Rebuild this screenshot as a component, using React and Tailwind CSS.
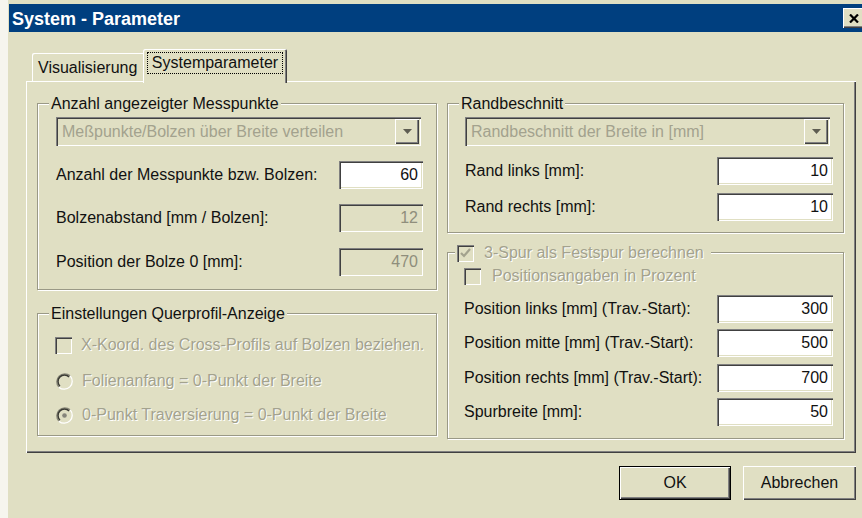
import React from "react";

// classic 3D edges
const raised =
  "shadow-[inset_1px_1px_#ffffff,inset_-1px_-1px_#404040,inset_-2px_-2px_#808080]";
const sunken =
  "shadow-[inset_1px_1px_#808080,inset_2px_2px_#404040,inset_-1px_-1px_#ffffff,inset_-2px_-2px_#e0dfc3]";
const grayed = "text-[#a3a28e] [text-shadow:1px_1px_#ffffff]";

function Group({ title, className, children, legendClass = "left-[11px]" }) {
  return (
    <div
      className={`relative border border-[#9a9986] shadow-[inset_1px_1px_#ffffff,1px_1px_#ffffff] ${className}`}
    >
      <div
        className={`absolute top-0 -translate-y-1/2 bg-[#e0dfc3] px-[2px] leading-[18px] whitespace-nowrap ${legendClass}`}
      >
        {title}
      </div>
      {children}
    </div>
  );
}

function Field({ value, disabled, className }) {
  return (
    <div
      className={`h-[28px] ${sunken} flex items-center justify-end pr-[5px] ${
        disabled ? "bg-[#e0dfc3] text-[#8f8e7c]" : "bg-white text-[#111111]"
      } ${className}`}
    >
      {value}
    </div>
  );
}

function Combo({ text }) {
  return (
    <div className={`h-[29px] ${sunken} flex p-[2px] mr-[2px]`}>
      <div className="flex-1 pl-[4px] flex items-center whitespace-nowrap overflow-hidden text-[#a3a28e]">
        {text}
      </div>
      <div className={`w-[24px] ${raised} bg-[#e0dfc3] flex items-center justify-center`}>
        <svg width="9" height="5" viewBox="0 0 9 5">
          <path d="M0 0h9L4.5 5z" fill="#5e5d52" />
        </svg>
      </div>
    </div>
  );
}

function CheckBox({ checked }) {
  return (
    <div className={`w-[17px] h-[17px] shrink-0 ${sunken} bg-[#e0dfc3] flex items-center justify-center`}>
      {checked && (
        <svg width="11" height="10" viewBox="0 0 11 10">
          <path d="M1 5l3 3 6-7" stroke="#a3a28e" strokeWidth="2.2" fill="none" />
        </svg>
      )}
    </div>
  );
}

function Radio({ checked }) {
  return (
    <svg width="17" height="17" viewBox="0 0 17 17" className="shrink-0">
      <circle cx="8.5" cy="8.5" r="7" fill="#e0dfc3" />
      <path d="M14.15 2.85A8 8 0 0 0 2.85 14.15" stroke="#8a897a" strokeWidth="1.3" fill="none" />
      <path d="M13.1 3.9A6.5 6.5 0 0 0 3.9 13.1" stroke="#3a3a34" strokeWidth="1.5" fill="none" />
      <path d="M14.15 2.85A8 8 0 0 1 2.85 14.15" stroke="#ffffff" strokeWidth="1.3" fill="none" />
      {checked && <circle cx="8.5" cy="8.5" r="2.3" fill="#85847a" />}
    </svg>
  );
}

function Row({ label, value, disabled, fieldClass, className }) {
  return (
    <div className={`flex items-center justify-between ${className}`}>
      <span className="whitespace-nowrap">{label}</span>
      <Field value={value} disabled={disabled} className={fieldClass} />
    </div>
  );
}

function Button({ children, isDefault }) {
  return (
    <button
      type="button"
      className={`h-[34px] bg-[#e0dfc3] ${
        isDefault ? "w-[112px] border border-black" : "w-[113px]"
      } ${raised} text-[16px] text-[#111111]`}
    >
      {children}
    </button>
  );
}

export default function App() {
  return (
    <div className="w-[862px] h-[518px] overflow-hidden flex bg-[#e0dfc3] font-['Liberation_Sans',Arial,sans-serif] text-[16px] leading-[18px] text-[#111111]">
      <div className="w-[8px] shrink-0 bg-[#f6f5ee]" />
      <div className="flex-1 min-w-0 flex flex-col">
        {/* caption bar */}
        <div className="mt-[4px] ml-[1px] h-[28px] bg-[#003f7f] flex items-center pl-[3px]">
          <span className="text-white font-bold text-[18px] pt-[1px]">System - Parameter</span>
          <div className={`ml-auto -mr-[2px] w-[21px] h-[20px] bg-[#e0dfc3] ${raised} flex items-center justify-center`}>
            <svg width="10" height="9" viewBox="0 0 10 9">
              <path d="M1 0.5L9 8.5M9 0.5L1 8.5" stroke="#000000" strokeWidth="2.2" />
            </svg>
          </div>
        </div>

        {/* tabs */}
        <div className="mt-[17px] ml-[24px] h-[32px] flex items-end">
          <div className="h-[28px] w-[111px] shadow-[inset_1px_1px_#ffffff] rounded-tl-[2px] pl-[6px] pt-[6px]">
            Visualisierung
          </div>
          <div className="relative z-10 -mb-[2px] h-[34px] w-[144px] bg-[#e0dfc3] rounded-t-[2px] shadow-[inset_1px_1px_#ffffff,inset_-1px_0_#404040,inset_-2px_0_#808080] flex justify-center pt-[3px]">
            <span className="h-[22px] border border-dotted border-black px-[4px] leading-[20px]">
              Systemparameter
            </span>
          </div>
        </div>

        {/* tab page */}
        <div className="ml-[18px] mr-[6px] h-[372px] shadow-[inset_1px_1px_#ffffff,inset_-1px_-1px_#404040,inset_-2px_-2px_#808080] flex gap-[10px] pt-[22px] pl-[11px]">
          <div className="w-[400px] flex flex-col">
            <Group title="Anzahl angezeigter Messpunkte" className="h-[187px] pl-[18px] pr-[13px] pt-[13px]">
              <Combo text="Meßpunkte/Bolzen über Breite verteilen" />
              <Row className="mt-[15px]" label="Anzahl der Messpunkte bzw. Bolzen:" value="60" fieldClass="w-[84px]" />
              <Row className="mt-[15px]" label="Bolzenabstand [mm / Bolzen]:" value="12" disabled fieldClass="w-[84px]" />
              <Row className="mt-[16px]" label="Position der Bolze 0 [mm]:" value="470" disabled fieldClass="w-[84px]" />
            </Group>
            <Group title="Einstellungen Querprofil-Anzeige" className="mt-[23px] h-[123px] pl-[17px] pt-[21px]">
              <div className="h-[20px] flex items-center gap-[9px]">
                <CheckBox />
                <span className={grayed}>X-Koord. des Cross-Profils auf Bolzen beziehen.</span>
              </div>
              <div className="mt-[16px] h-[20px] flex items-center gap-[9px] pl-[1px]">
                <Radio />
                <span className={grayed}>Folienanfang = 0-Punkt der Breite</span>
              </div>
              <div className="mt-[14px] h-[20px] flex items-center gap-[9px] pl-[1px]">
                <Radio checked />
                <span className={grayed}>0-Punkt Traversierung = 0-Punkt der Breite</span>
              </div>
            </Group>
          </div>

          <div className="w-[397px] flex flex-col">
            <Group title="Randbeschnitt" className="h-[130px] pl-[17px] pr-[10px] pt-[13px]">
              <div className="mr-[1px]">
                <Combo text="Randbeschnitt der Breite in [mm]" />
              </div>
              <Row className="mt-[11px]" label="Rand links [mm]:" value="10" fieldClass="w-[116px] h-[27px]" />
              <Row className="mt-[8px]" label="Rand rechts [mm]:" value="10" fieldClass="w-[116px] h-[27px]" />
            </Group>
            <Group
              legendClass="left-[7px]"
              title={
                <span className="flex items-center gap-[10px] pr-[5px]">
                  <CheckBox checked />
                  <span className={grayed}>3-Spur als Festspur berechnen</span>
                </span>
              }
              className="mt-[19px] h-[187px] pl-[16px] pr-[10px] pt-[14px]"
            >
              <div className="h-[18px] flex items-center gap-[11px]">
                <CheckBox />
                <span className={grayed}>Positionsangaben in Prozent</span>
              </div>
              <Row className="mt-[10px]" label="Position links [mm] (Trav.-Start):" value="300" fieldClass="w-[116px]" />
              <Row className="mt-[6px]" label="Position mitte [mm] (Trav.-Start):" value="500" fieldClass="w-[116px]" />
              <Row className="mt-[7px]" label="Position rechts [mm] (Trav.-Start):" value="700" fieldClass="w-[116px]" />
              <Row className="mt-[6px]" label="Spurbreite [mm]:" value="50" fieldClass="w-[116px]" />
            </Group>
          </div>
        </div>

        {/* dialog buttons */}
        <div className="mt-[13px] mr-[6px] flex justify-end gap-[12px]">
          <Button isDefault>OK</Button>
          <Button>Abbrechen</Button>
        </div>
      </div>
    </div>
  );
}
